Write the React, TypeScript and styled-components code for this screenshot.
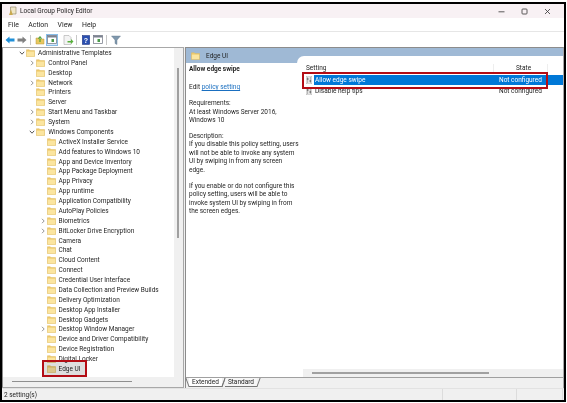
import React from "react";
import styled, { createGlobalStyle } from "styled-components";

const Global = createGlobalStyle`
  html, body { margin: 0; padding: 0; background: #fff; }
  #root { width: 567px; height: 403px; overflow: hidden; }
`;

const Frame = styled.div`
  box-sizing: border-box;
  width: 567px;
  height: 403px;
  background: #fff;
  padding: 2px 1px 1px 0;
  font-family: Roboto, "Noto Sans", sans-serif;
  font-size: 6.5px;
  color: #1e1e1e;
`;
const Win = styled.div`
  box-sizing: border-box;
  width: 100%;
  height: 100%;
  border: 2px solid #000;
  background: #f0f0f0;
  display: flex;
  flex-direction: column;
  overflow: hidden;
  filter: blur(0.25px);
`;
const TitleBar = styled.div`
  height: 14px;
  flex: none;
  background: #f8f1f4;
  display: flex;
  align-items: center;
  padding-left: 6px;
  gap: 3px;
`;
const WinButtons = styled.div`
  margin-left: auto;
  display: flex;
  align-items: center;
  gap: 16px;
  padding-right: 13px;
  svg { display: block; }
`;
const MenuBar = styled.div`
  height: 14px;
  flex: none;
  background: #fff;
  display: flex;
  align-items: center;
  padding-left: 6px;
  gap: 9.5px;
  font-size: 6.9px;
  border-bottom: 1px solid #e6e6e6;
  box-sizing: border-box;
`;
const ToolBar = styled.div`
  height: 15px;
  flex: none;
  background: #fff;
  display: flex;
  align-items: center;
  padding-left: 2px;
`;
const ToolBtn = styled.div<{ $active?: boolean; $after?: boolean }>`
  width: 12px;
  height: 12px;
  margin-left: ${(p) => (p.$after ? "4px" : "0")};
  display: flex;
  align-items: center;
  justify-content: center;
  background: ${(p) => (p.$active ? "#d5e8f8" : "transparent")};
  outline: ${(p) => (p.$active ? "1px solid #88bde8" : "none")};
  outline-offset: -1px;
`;
const Sep = styled.div`
  width: 1px;
  height: 10px;
  margin: 0 3px 0 2px;
  background: #c8c8c8;
`;
const Panes = styled.div`
  flex: 1;
  min-height: 0;
  display: flex;
  gap: 1px;
`;
const TreePane = styled.div`
  position: relative;
  box-sizing: border-box;
  width: 182px;
  flex: none;
  background: #fff;
  border: 1px solid #a8a8a8;
  border-left-color: #8c8c8c;
  overflow: hidden;
`;
const TreeList = styled.div`
  display: flex;
  flex-direction: column;
`;
const TreeRow = styled.div<{ $level: number }>`
  height: 9.875px;
  flex: none;
  display: flex;
  align-items: center;
  padding-left: ${(p) => p.$level * 10.25 + 15}px;
  white-space: nowrap;
`;
const Chevron = styled.span`
  width: 8px;
  flex: none;
  display: flex;
  justify-content: center;
  svg { display: block; }
`;
const Folder = styled.span`
  flex: none;
  margin-right: 3px;
  display: flex;
  svg { display: block; }
`;
const Highlight = styled.div<{ $tint?: boolean }>`
  position: absolute;
  box-sizing: border-box;
  border: 2.5px solid #b30d15;
  background: ${(p) => (p.$tint ? "rgba(0,0,0,0.13)" : "transparent")};
`;
const VScroll = styled.div`
  position: absolute;
  top: 0;
  right: 0;
  bottom: 10px;
  width: 9px;
  background: #f0f0f0;
`;
const VThumb = styled.div`
  position: absolute;
  left: 3px;
  top: 20px;
  width: 2px;
  height: 170px;
  background: #a0a0a0;
`;
const HScroll = styled.div`
  position: absolute;
  left: 0;
  right: 0;
  bottom: 0;
  height: 10px;
  background: #f0f0f0;
`;
const HThumb = styled.div`
  position: absolute;
  left: 9px;
  top: 3.5px;
  width: 120px;
  height: 1.5px;
  background: #8f8f8f;
`;
const DetailPane = styled.div`
  flex: 1;
  min-width: 0;
  display: flex;
  flex-direction: column;
  border-left: 1px solid #8c8c8c;
  border-right: 1px solid #a8a8a8;
  border-top: 1px solid #8c8c8c;
  box-sizing: border-box;
`;
const DetailHead = styled.div`
  height: 15px;
  flex: none;
  background: #9fb9d5;
  display: flex;
  align-items: flex-start;
  padding: 4px 0 0 5px;
  box-sizing: border-box;
  gap: 6px;
  line-height: 8px;
`;
const DetailBody = styled.div`
  flex: 1;
  min-height: 0;
  background: #fff;
  display: flex;
`;
const Description = styled.div`
  position: relative;
  z-index: 1;
  width: 111px;
  flex: none;
  padding: 2px 0 0 3px;
  line-height: 8.4px;
  box-sizing: border-box;
  white-space: nowrap;
`;
const PolicyTitle = styled.div`
  font-weight: 700;
  margin-bottom: 9.6px;
`;
const Para = styled.div`
  margin-bottom: 7.7px;
`;
const Lnk = styled.span`
  color: #1a6fc0;
  text-decoration: underline;
`;
const ListArea = styled.div`
  flex: 1;
  min-width: 0;
  margin-top: -7px;
  padding-top: 7px;
  position: relative;
  background: #fff;
  border-top-left-radius: 7px;
`;
const ListHead = styled.div`
  height: 10px;
  margin-bottom: 2px;
  display: flex;
  align-items: center;
  padding-left: 9px;
`;
const HeadName = styled.span`
  flex: 1;
`;
const HeadState = styled.span`
  width: 55px;
  margin-right: 15px;
  padding-left: 22px;
  box-sizing: border-box;
  border-left: 1px solid #eee;
  border-right: 1px solid #eee;
`;
const ListRow = styled.div`
  height: 10px;
  margin-bottom: 1px;
  display: flex;
  align-items: center;
  padding-left: 9px;
  svg { flex: none; display: block; }
`;
const RowMain = styled.div<{ $sel?: boolean }>`
  flex: 1;
  align-self: stretch;
  display: flex;
  align-items: center;
  margin-left: 2px;
  padding-left: 1px;
  background: ${(p) => (p.$sel ? "#0078d7" : "transparent")};
  color: ${(p) => (p.$sel ? "#fff" : "#1e1e1e")};
`;
const RowName = styled.span`
  flex: 1;
`;
const RowState = styled.span`
  width: 64px;
  flex: none;
`;
const ListHScroll = styled.div`
  position: absolute;
  left: 6px;
  right: 0;
  bottom: 0;
  height: 8px;
  background: #f0f0f0;
`;
const ListHThumb = styled.div`
  position: absolute;
  left: 9px;
  top: 3px;
  width: 177px;
  height: 1.5px;
  background: #a0a0a0;
`;
const TabStrip = styled.div`
  height: 11px;
  flex: none;
  display: flex;
  align-items: flex-start;
  padding-left: 3px;
  background: #f0f0f0;
  border-top: 1px solid #a0a0a0;
  box-sizing: border-box;
`;
const Tab = styled.div<{ $active?: boolean; $lean: number }>`
  position: relative;
  height: 9px;
  display: flex;
  align-items: center;
  padding: 0 3px;
  margin-right: 3px;
  background: ${(p) => (p.$active ? "#fff" : "#f6f6f6")};
  border-bottom: 1px solid #777;
  box-sizing: border-box;
  &::before, &::after {
    content: "";
    position: absolute;
    top: 0;
    bottom: -1px;
    width: 1px;
    background: #777;
  }
  &::before {
    left: -2px;
    transform: skewX(${(p) => p.$lean}deg);
  }
  &::after {
    right: -2px;
    transform: skewX(-20deg);
  }
`;
const StatusBar = styled.div`
  height: 12px;
  flex: none;
  display: flex;
  background: #f0f0f0;
  padding-right: 1px;
  border-top: 1px solid #e2e2e2;
  box-sizing: border-box;
`;
const StatusCell = styled.div<{ $w?: number }>`
  flex: ${(p) => (p.$w ? "none" : 1)};
  width: ${(p) => (p.$w ? `${p.$w}px` : "auto")};
  padding-left: 2px;
  box-sizing: border-box;
  display: flex;
  align-items: center;
  border-right: 1px solid #dcdcdc;
`;

const FolderIcon = () => (
  <svg width="9" height="8" viewBox="0 0 9 8">
    <path d="M0.4 0.8 H3.3 L4.1 1.6 H8.6 V7.6 H0.4 Z" fill="#f0cb6c" stroke="#dcb85e" strokeWidth="0.5" />
    <rect x="0.9" y="2.6" width="7.2" height="4.6" fill="#fbe5a0" />
  </svg>
);
const Right = () => (
  <svg width="4" height="6" viewBox="0 0 4 6">
    <path d="M1 0.8 L3.2 3 L1 5.2" fill="none" stroke="#777" strokeWidth="0.8" />
  </svg>
);
const Down = () => (
  <svg width="6" height="4" viewBox="0 0 6 4">
    <path d="M0.8 0.8 L3 3.2 L5.2 0.8" fill="none" stroke="#444" strokeWidth="0.9" />
  </svg>
);
const SettingIcon = () => (
  <svg width="6" height="8" viewBox="0 0 6 8">
    <rect x="0.2" y="0.2" width="5.6" height="7.6" fill="#f3f3f3" stroke="#aaa" strokeWidth="0.4" />
    <path d="M1.7 1 V7 M4.3 1 V7" stroke="#777" strokeWidth="0.6" />
    <path d="M0.9 3 H2.5 M3.5 5 H5.1" stroke="#333" strokeWidth="0.9" />
  </svg>
);
const PanelIcon = () => (
  <svg width="10" height="9" viewBox="0 0 10 9">
    <rect x="0.5" y="0.5" width="9" height="8" fill="#fff" stroke="#6d7280" strokeWidth="0.7" />
    <rect x="0.5" y="0.5" width="9" height="2" fill="#7c8290" />
    <rect x="4.5" y="4" width="2.5" height="3" fill="#4a9a4a" />
  </svg>
);

type Item = { t: string; l: number; c?: "r" | "d" };
const items: Item[] = [
  { t: "Administrative Templates", l: 0, c: "d" },
  { t: "Control Panel", l: 1, c: "r" },
  { t: "Desktop", l: 1 },
  { t: "Network", l: 1, c: "r" },
  { t: "Printers", l: 1 },
  { t: "Server", l: 1 },
  { t: "Start Menu and Taskbar", l: 1, c: "r" },
  { t: "System", l: 1, c: "r" },
  { t: "Windows Components", l: 1, c: "d" },
  { t: "ActiveX Installer Service", l: 2 },
  { t: "Add features to Windows 10", l: 2 },
  { t: "App and Device Inventory", l: 2 },
  { t: "App Package Deployment", l: 2 },
  { t: "App Privacy", l: 2 },
  { t: "App runtime", l: 2 },
  { t: "Application Compatibility", l: 2 },
  { t: "AutoPlay Policies", l: 2 },
  { t: "Biometrics", l: 2, c: "r" },
  { t: "BitLocker Drive Encryption", l: 2, c: "r" },
  { t: "Camera", l: 2 },
  { t: "Chat", l: 2 },
  { t: "Cloud Content", l: 2 },
  { t: "Connect", l: 2 },
  { t: "Credential User Interface", l: 2 },
  { t: "Data Collection and Preview Builds", l: 2 },
  { t: "Delivery Optimization", l: 2 },
  { t: "Desktop App Installer", l: 2 },
  { t: "Desktop Gadgets", l: 2 },
  { t: "Desktop Window Manager", l: 2, c: "r" },
  { t: "Device and Driver Compatibility", l: 2 },
  { t: "Device Registration", l: 2 },
  { t: "Digital Locker", l: 2 },
  { t: "Edge UI", l: 2 },
];

export default function App() {
  return (
    <>
      <Global />
      <Frame>
        <Win>
          <TitleBar>
            <svg width="9" height="10" viewBox="0 0 9 10">
              <path d="M2.5 1 H8 V8 H2.5 Z" fill="#efe6c8" stroke="#8a7f60" strokeWidth="0.6" />
              <path d="M1 9 L3 3.5 L4.8 9 Z" fill="#c9a94e" />
            </svg>
            <span>Local Group Policy Editor</span>
            <WinButtons>
              <svg width="7" height="7" viewBox="0 0 7 7"><path d="M0.5 3.8 H6.5" stroke="#333" strokeWidth="0.8" /></svg>
              <svg width="7" height="7" viewBox="0 0 7 7"><rect x="1" y="1" width="5" height="5" rx="0.8" fill="none" stroke="#333" strokeWidth="0.8" /></svg>
              <svg width="7" height="7" viewBox="0 0 7 7"><path d="M1 1 L6 6 M6 1 L1 6" stroke="#333" strokeWidth="0.8" /></svg>
            </WinButtons>
          </TitleBar>
          <MenuBar>
            <span>File</span><span>Action</span><span>View</span><span>Help</span>
          </MenuBar>
          <ToolBar>
            <ToolBtn><svg width="10" height="8" viewBox="0 0 10 8"><path d="M0.5 4 L4.5 0.5 V2.5 H9.5 V5.5 H4.5 V7.5 Z" fill="#1f8fd8" /></svg></ToolBtn>
            <ToolBtn><svg width="10" height="8" viewBox="0 0 10 8"><path d="M9.5 4 L5.5 0.5 V2.5 H0.5 V5.5 H5.5 V7.5 Z" fill="#808080" /></svg></ToolBtn>
            <Sep />
            <ToolBtn><svg width="10" height="10" viewBox="0 0 10 10"><path d="M1 3 H4 L5 4 H9 V9 H1 Z" fill="#e8c860" stroke="#b89a40" strokeWidth="0.5" /><path d="M5 7 V2 M3.4 3.6 L5 1.5 L6.6 3.6" stroke="#3a9a2a" strokeWidth="1" fill="none" /></svg></ToolBtn>
            <ToolBtn $active><PanelIcon /></ToolBtn>
            <ToolBtn $after><svg width="11" height="10" viewBox="0 0 11 10"><path d="M1 0.5 H6 L8 2.5 V9.5 H1 Z" fill="#f4f4f4" stroke="#aaa" strokeWidth="0.6" /><path d="M4.5 6 H8 V4 L10.5 6.5 L8 9 V7.5 H4.5 Z" fill="#58b03c" /></svg></ToolBtn>
            <Sep />
            <ToolBtn><svg width="8" height="10" viewBox="0 0 8 10"><rect x="0.3" y="0.5" width="7.4" height="9" fill="#2a4fb0" stroke="#1a2f78" strokeWidth="0.5" /><text x="4" y="7.6" fontSize="7" fontWeight="700" textAnchor="middle" fill="#fff" fontFamily="Liberation Sans, sans-serif">?</text></svg></ToolBtn>
            <ToolBtn><PanelIcon /></ToolBtn>
            <Sep />
            <ToolBtn><svg width="10" height="10" viewBox="0 0 10 10"><path d="M0.5 1 H9.5 L6 5 V9.5 L4 8.5 V5 Z" fill="#7f98ad" stroke="#5f7488" strokeWidth="0.4" /></svg></ToolBtn>
          </ToolBar>
          <Panes>
            <TreePane>
              <TreeList>
                {items.map((it) => (
                  <TreeRow key={it.t} $level={it.l}>
                    <Chevron>{it.c === "r" ? <Right /> : it.c === "d" ? <Down /> : null}</Chevron>
                    <Folder><FolderIcon /></Folder>
                    <span>{it.t}</span>
                  </TreeRow>
                ))}
              </TreeList>
              <Highlight $tint style={{ left: 39, top: 312, width: 45, height: 17 }} />
              <VScroll><VThumb /></VScroll>
              <HScroll><HThumb /></HScroll>
            </TreePane>
            <DetailPane>
              <DetailHead><FolderIcon /><span>Edge UI</span></DetailHead>
              <DetailBody>
                <Description>
                  <PolicyTitle>Allow edge swipe</PolicyTitle>
                  <Para>Edit <Lnk>policy setting</Lnk></Para>
                  <Para>Requirements:<br />At least Windows Server 2016,<br />Windows 10</Para>
                  <Para>Description:<br />If you disable this policy setting, users<br />will not be able to invoke any system<br />UI by swiping in from any screen<br />edge.</Para>
                  <Para>If you enable or do not configure this<br />policy setting, users will be able to<br />invoke system UI by swiping in from<br />the screen edges.</Para>
                </Description>
                <ListArea>
                  <ListHead><HeadName>Setting</HeadName><HeadState>State</HeadState></ListHead>
                  <ListRow><SettingIcon /><RowMain $sel><RowName>Allow edge swipe</RowName><RowState>Not configured</RowState></RowMain></ListRow>
                  <ListRow><SettingIcon /><RowMain><RowName>Disable help tips</RowName><RowState>Not configured</RowState></RowMain></ListRow>
                  <Highlight style={{ left: 5, top: 16, width: 246, height: 16.5 }} />
                  <ListHScroll><ListHThumb /></ListHScroll>
                </ListArea>
              </DetailBody>
              <TabStrip>
                <Tab $active $lean={20}>Extended</Tab>
                <Tab $lean={-20}>Standard</Tab>
              </TabStrip>
            </DetailPane>
          </Panes>
          <StatusBar>
            <StatusCell>2 setting(s)</StatusCell>
            <StatusCell $w={74} />
            <StatusCell $w={46} />
          </StatusBar>
        </Win>
      </Frame>
    </>
  );
}
